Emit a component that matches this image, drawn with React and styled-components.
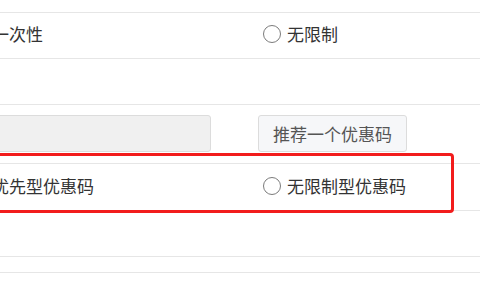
import React from 'react';
import styled, { createGlobalStyle } from 'styled-components';

const GlobalStyle = createGlobalStyle`
  html, body {
    margin: 0;
    padding: 0;
    background: #fff;
    overflow: hidden;
  }

  body {
    font-family: 'Noto Sans CJK SC', 'Noto Sans', sans-serif;
    color: #333;
  }
`;

function CouponSettings() {
  return (
    <Table>
      <Row>
        <Option label="一次性" />
        <Option label="无限制" />
      </Row>
      <Row />
      <Row $tall>
        <CodeInput type="text" disabled />
        <div>
          <Button type="button">推荐一个优惠码</Button>
        </div>
      </Row>
      <Row $marked>
        <Option label="优先型优惠码" />
        <Option label="无限制型优惠码" />
        <Highlight />
      </Row>
      <Row />
      <Row $short />
    </Table>
  );
}

function Option({ label }) {
  return (
    <OptionLabel>
      <Radio />
      <span>{label}</span>
    </OptionLabel>
  );
}

const Table = styled.div`
  width: 520px;
  margin: 12px 0 0 -32px;
  border-top: 1px solid #e6e6e6;
`;

const Row = styled.div`
  position: relative;
  display: grid;
  grid-template-columns: 295px 1fr;
  align-items: center;
  box-sizing: border-box;
  height: ${p => (p.$tall ? 59 : p.$short ? 16 : p.$marked ? 47 : 46)}px;
  padding: ${p => (p.$tall ? '10px 0 11px' : '0')};
  border-bottom: 1px solid #e6e6e6;
`;

const OptionLabel = styled.label`
  display: flex;
  align-items: center;
  gap: 6px;
  margin-top: -3px;
  font-size: 17px;
  line-height: 22px;
  color: #333;
`;

const Radio = styled.span`
  flex: none;
  box-sizing: border-box;
  width: 18px;
  height: 18px;
  border: 1.5px solid #7b7b7b;
  border-radius: 50%;
  background: #fff;
`;

const CodeInput = styled.input`
  box-sizing: border-box;
  width: 243px;
  height: 37px;
  margin: 0;
  border: 1px solid #dcdcdc;
  border-radius: 3px;
  background: #f0f0f0;
`;

const Button = styled.button`
  box-sizing: border-box;
  height: 37px;
  margin-left: -5px;
  padding: 0 14px;
  border: 1px solid #dcdcdc;
  border-radius: 3px;
  background: #f6f7f9;
  color: #555;
  font-family: inherit;
  font-size: 17px;
  line-height: 22px;
`;

const Highlight = styled.div`
  position: absolute;
  top: -11px;
  left: -40px;
  right: 34px;
  bottom: -3px;
  border: 3px solid #f21c1c;
  border-radius: 4px;
  pointer-events: none;
`;

export default function App() {
  return (
    <>
      <GlobalStyle />
      <CouponSettings />
    </>
  );
}
